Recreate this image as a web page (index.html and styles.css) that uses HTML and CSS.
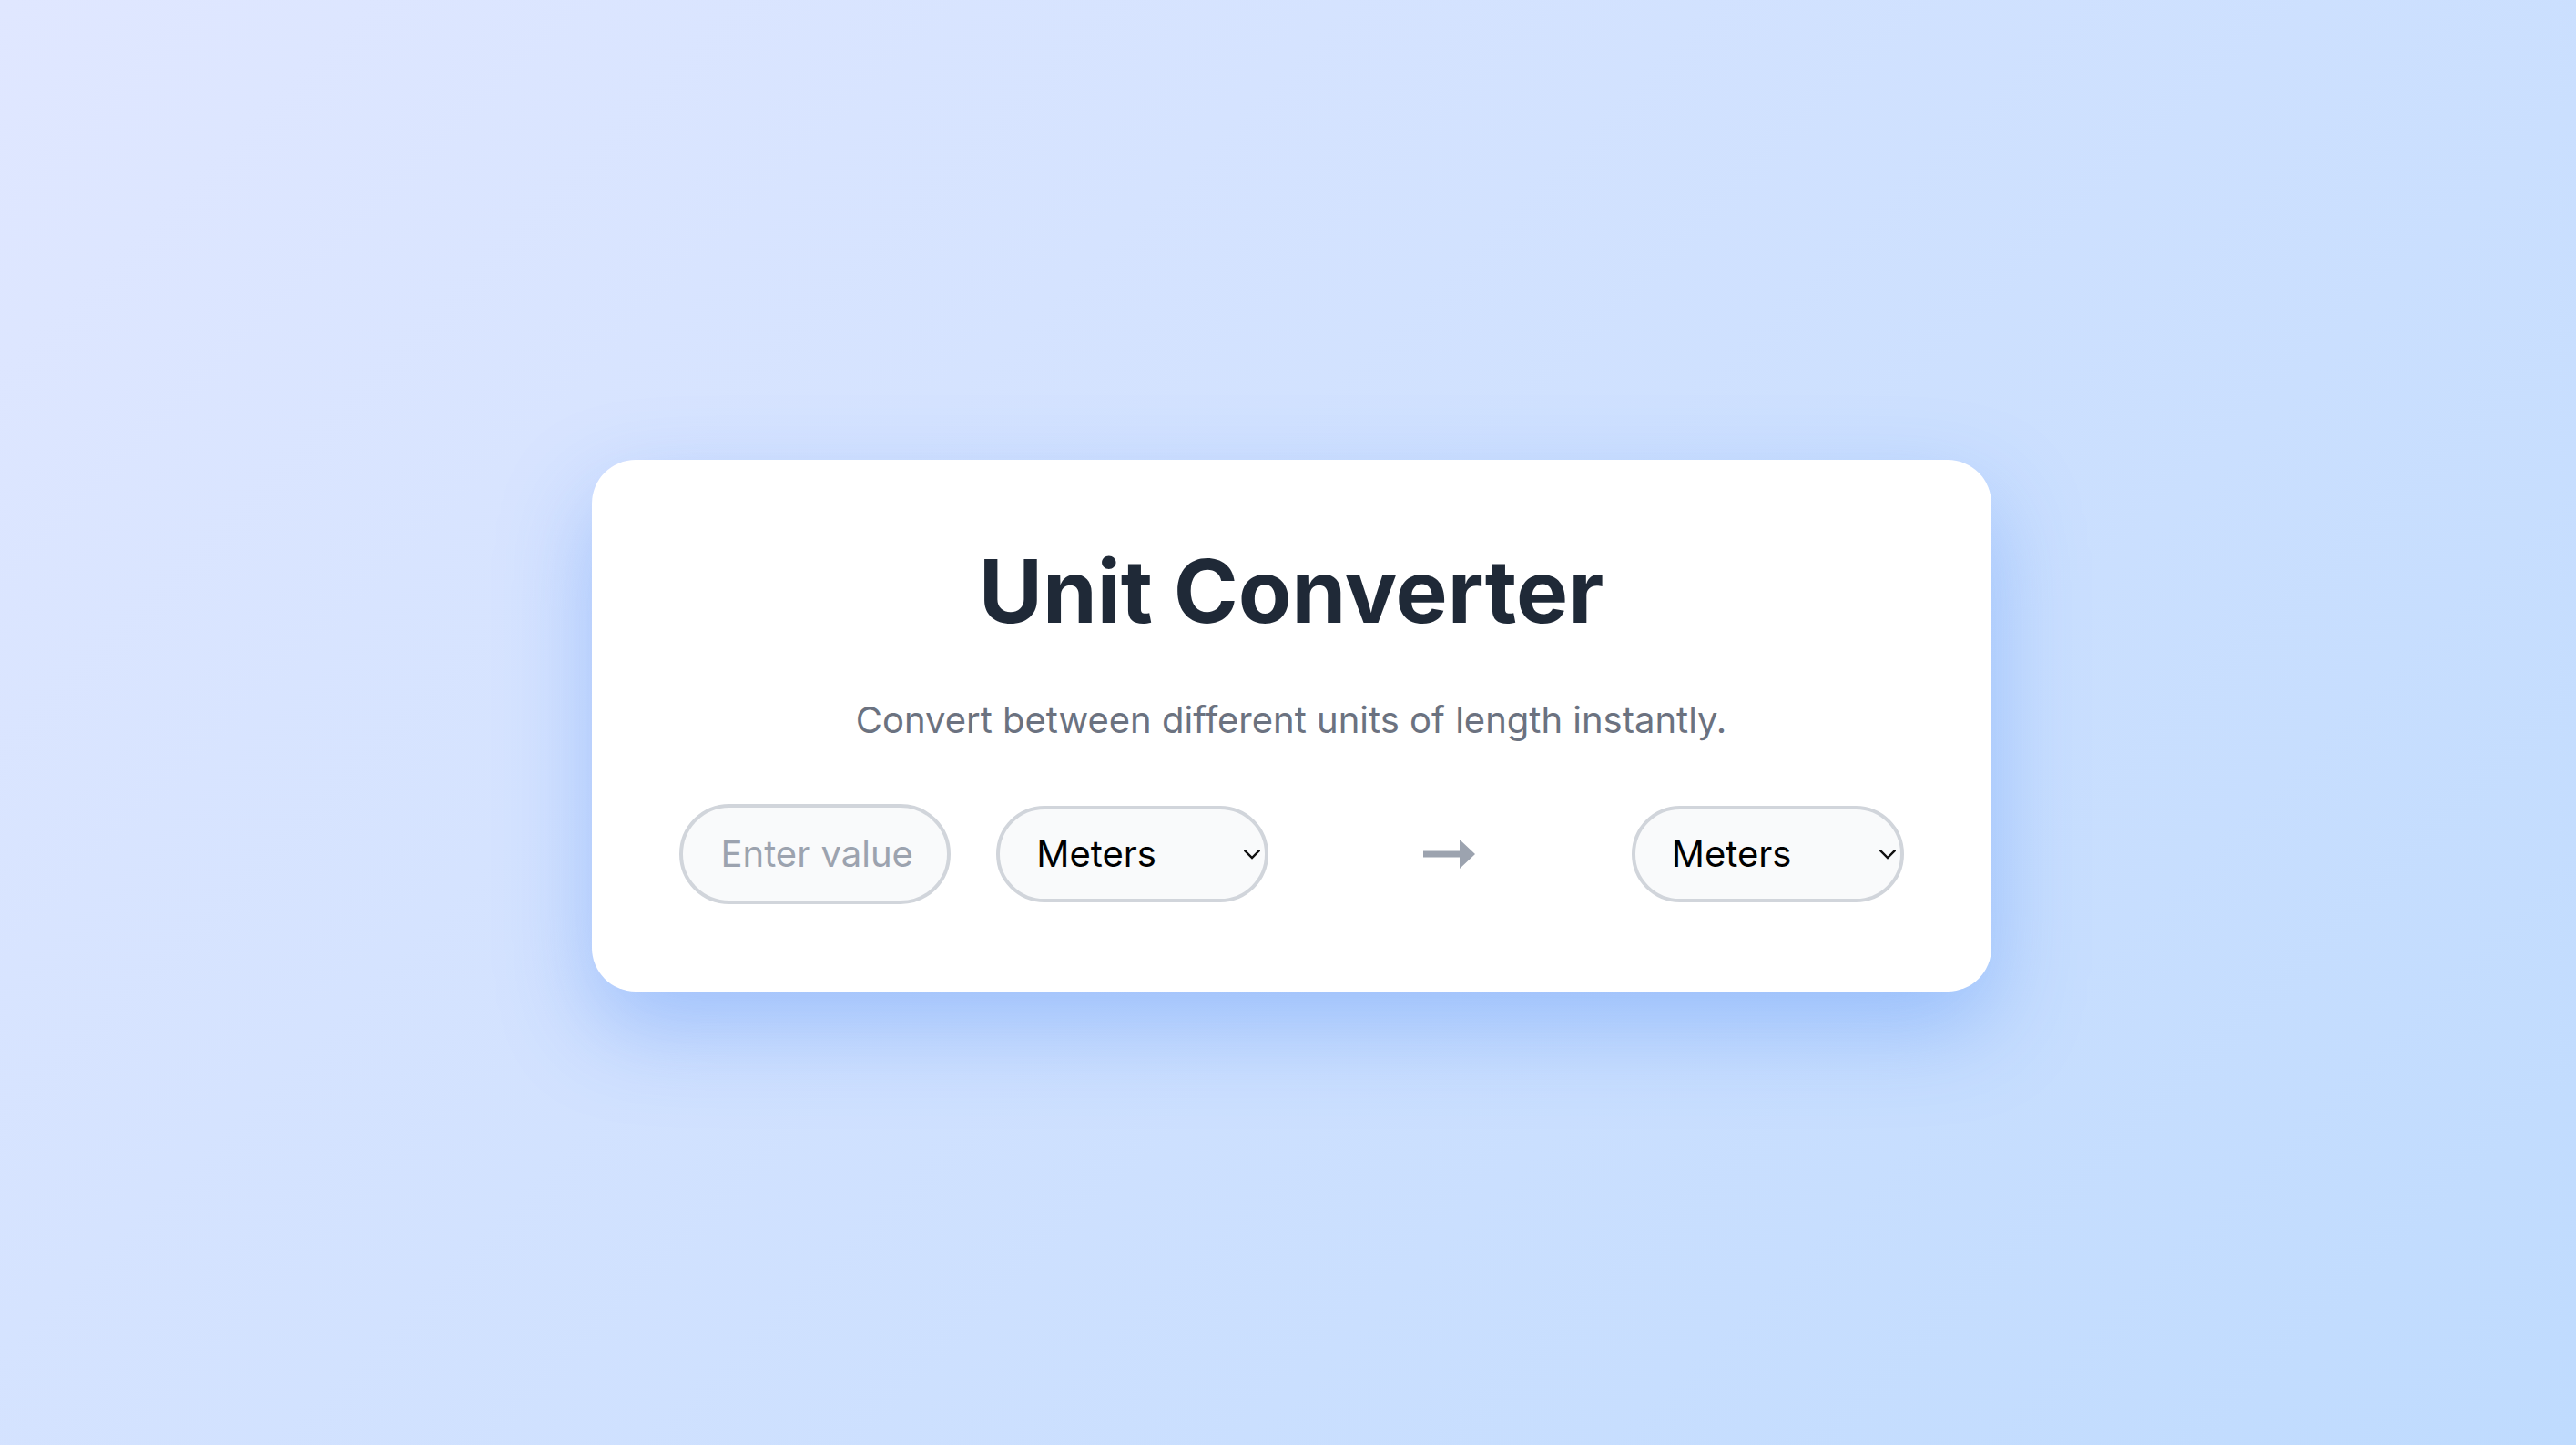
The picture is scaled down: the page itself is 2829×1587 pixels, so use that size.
FILE: index.html
```html
<!DOCTYPE html>
<html lang="en">
<head>
<meta charset="utf-8">
<title>Unit Converter</title>
<link rel="stylesheet" href="styles.css">
</head>
<body>
  <main class="card">
    <h1 class="title">Unit Converter</h1>
    <p class="subtitle">Convert between different units of length instantly.</p>
    <div class="row">
      <input class="field input" type="text" inputmode="decimal" placeholder="Enter value">
      <div class="select-wrap">
        <select class="field select">
          <option>Meters</option>
          <option>Kilometers</option>
          <option>Feet</option>
          <option>Miles</option>
        </select>
        <svg class="chevron" width="18" height="11" viewBox="0 0 18 11" aria-hidden="true">
          <path d="M1.5 1.5 L9 9 L16.5 1.5" fill="none" stroke="#111" stroke-width="2.4" stroke-linecap="square"/>
        </svg>
      </div>
      <div class="arrow" aria-label="to">
        <svg width="58" height="32" viewBox="0 0 58 32" aria-hidden="true">
          <rect x="0" y="12.5" width="42" height="7" fill="#9ca3af"/>
          <polygon points="40,0 57,16 40,32" fill="#9ca3af"/>
        </svg>
      </div>
      <div class="select-wrap">
        <select class="field select">
          <option>Meters</option>
          <option>Kilometers</option>
          <option>Feet</option>
          <option>Miles</option>
        </select>
        <svg class="chevron" width="18" height="11" viewBox="0 0 18 11" aria-hidden="true">
          <path d="M1.5 1.5 L9 9 L16.5 1.5" fill="none" stroke="#111" stroke-width="2.4" stroke-linecap="square"/>
        </svg>
      </div>
    </div>
  </main>
</body>
</html>
```
FILE: styles.css
```css
* { box-sizing: border-box; }
html, body { margin: 0; height: 100%; }
body {
  min-height: 100vh;
  display: flex;
  align-items: center;
  justify-content: center;
  padding: 6px 0 0 7px;
  background: linear-gradient(135deg, #e0e7ff 0%, #bfdbfe 100%);
  font-family: Inter, "Noto Sans", sans-serif;
}
.card {
  width: 1537px;
  background: #ffffff;
  border-radius: 48px;
  padding: 96px;
  box-shadow: 0 40px 100px rgba(59, 130, 246, 0.35);
  text-align: center;
}
.title {
  margin: 0;
  font-size: 96px;
  line-height: 1;
  font-weight: 700;
  color: #1f2937;
  letter-spacing: 0;
}
.subtitle {
  margin: 64px 0 0;
  font-size: 40px;
  line-height: 60px;
  color: #6b7280;
}
.row {
  margin-top: 62px;
  display: grid;
  grid-template-columns: repeat(4, 1fr);
  column-gap: 50px;
  align-items: center;
}
.field {
  width: 100%;
  font-family: Inter, "Noto Sans", sans-serif;
  font-size: 40px;
  line-height: 48px;
  padding: 27px 42px;
  border: 4px solid #d1d5db;
  border-radius: 9999px;
  background: #f9fafb;
  color: #000;
  outline: none;
  text-align: left;
}
.input { padding: 27px 24px 27px 42px; }
.field::placeholder { color: #9ca3af; opacity: 1; }
.select-wrap { position: relative; }
.select {
  -webkit-appearance: none;
  appearance: none;
  padding: 25px 40px 25px 40px;
}
.chevron {
  position: absolute;
  right: 9px;
  top: 50%;
  margin-top: -5px;
  pointer-events: none;
}
.arrow {
  display: flex;
  justify-content: center;
  align-items: center;
}
.arrow svg { display: block; }
```
